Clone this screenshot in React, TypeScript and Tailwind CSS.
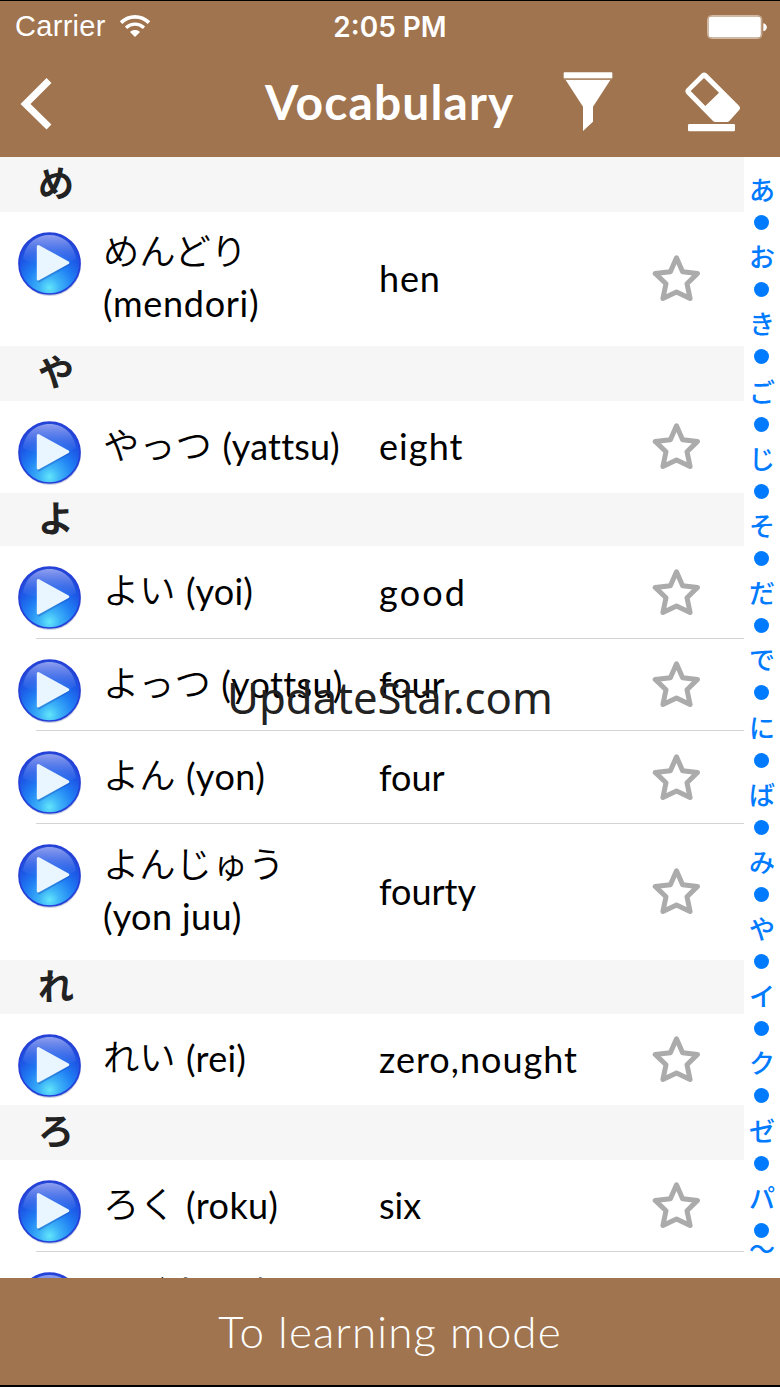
type Word = {
  kana: string;
  romaji?: string;
  meaning?: string;
  height: string;
  romajiTracking?: string;
  meaningTracking?: string;
  tall?: boolean;
  line?: boolean;
};
type Section = { title: string; height: string; words: Word[] };

const sections: Section[] = [
  {
    title: "め",
    height: "h-[55px]",
    words: [
      { kana: "めんどり", romaji: "(mendori)", meaning: "hen", height: "h-[134px]", romajiTracking: "tracking-[0.7px]", meaningTracking: "tracking-[0.8px]", tall: true },
    ],
  },
  {
    title: "や",
    height: "h-[55px]",
    words: [{ kana: "やっつ", romaji: "(yattsu)", meaning: "eight", height: "h-[92px]", meaningTracking: "tracking-[1.1px]" }],
  },
  {
    title: "よ",
    height: "h-[53px]",
    words: [
      { kana: "よい", romaji: "(yoi)", meaning: "good", height: "h-[93px]", meaningTracking: "tracking-[2.2px]", line: true },
      { kana: "よっつ", romaji: "(yottsu)", meaning: "four", height: "h-[92px]", romajiTracking: "tracking-[0.4px]", line: true },
      { kana: "よん", romaji: "(yon)", meaning: "four", height: "h-[93px]", romajiTracking: "tracking-[0.5px]", line: true },
      { kana: "よんじゅう", romaji: "(yon juu)", meaning: "fourty", height: "h-[136px]", romajiTracking: "tracking-[0.4px]", tall: true },
    ],
  },
  {
    title: "れ",
    height: "h-[54px]",
    words: [{ kana: "れい", romaji: "(rei)", meaning: "zero,nought", height: "h-[91px]", meaningTracking: "tracking-[1px]" }],
  },
  {
    title: "ろ",
    height: "h-[55px]",
    words: [
      { kana: "ろく", romaji: "(roku)", meaning: "six", height: "h-[92px]", romajiTracking: "tracking-[0.4px]", line: true },
      { kana: "ろくじゅう", height: "h-[136px]", tall: true },
    ],
  },
];

const indexLetters = ["あ", "お", "き", "ご", "じ", "そ", "だ", "で", "に", "ば", "み", "や", "イ", "ク", "ゼ", "パ"];

function WifiIcon() {
  return (
    <svg className="ml-[14px] h-[24px] w-[30px]" viewBox="0 0 90 72" fill="none" stroke="#fff">
      <path d="M3 23C27 0 63 0 87 23" strokeWidth="11" />
      <path d="M18 38C34 24 56 24 72 38" strokeWidth="10" />
      <path d="M30 51C39 43 51 43 60 51L45 66Z" fill="#fff" stroke="none" />
    </svg>
  );
}

function BatteryIcon() {
  return (
    <svg className="h-[24px] w-[60px]" viewBox="0 0 180 72">
      <rect x="1.5" y="1.5" width="163" height="69" rx="12" fill="none" stroke="#d3b9a3" strokeWidth="3" />
      <rect x="4.500" y="4.500" width="157" height="63" rx="9" fill="#fff" />
      <path d="M169 25C183 28 183 46 169 49Z" fill="#fff" />
    </svg>
  );
}

function FilterIcon() {
  return (
    <svg className="h-[60px] w-[50px]" viewBox="0 0 150 180" fill="#fff">
      <rect x="2" y="1" width="146" height="18" rx="2" />
      <path d="M8 24H142L90 104V149L60 177V104Z" />
      <path d="M4 21H146" stroke="#d5c1b1" strokeWidth="2" />
    </svg>
  );
}

function EraserIcon() {
  return (
    <svg className="h-[60px] w-[56px]" viewBox="0 0 168 180" fill="#fff">
      <path
        fillRule="evenodd"
        d="M49 5Q57-2 66 5L162 101Q168 108 162 115L133 147Q130 150 126 150H91Q87 150 84 147L4 65Q-2 57 4 50ZM57 18L17 57L61 102L102 62Z"
      />
      <rect x="9" y="156" width="141" height="22" rx="4" />
    </svg>
  );
}

function PlayIcon() {
  return (
    <svg className="mt-[19.500px] h-[65px] w-[65px] shrink-0" viewBox="0 0 65 65">
      <defs>
        <radialGradient id="ball" cx="0.5" cy="0.9" r="0.82">
          <stop offset="0" stopColor="#62e6fa" />
          <stop offset="0.2" stopColor="#3db4f8" />
          <stop offset="0.48" stopColor="#2080f4" />
          <stop offset="0.75" stopColor="#1c57e6" />
          <stop offset="1" stopColor="#2347d6" />
        </radialGradient>
        <linearGradient id="gloss" x1="0" y1="0" x2="0" y2="1">
          <stop offset="0" stopColor="#a3aff4" stopOpacity="0.85" />
          <stop offset="1" stopColor="#5d8df3" stopOpacity="0.1" />
        </linearGradient>
      </defs>
      <circle cx="32" cy="33" r="31" fill="#8b96b8" opacity="0.45" />
      <circle cx="31.5" cy="31.5" r="30.5" fill="url(#ball)" stroke="#2540d8" strokeWidth="1.7" />
      <path d="M5 27C7 12 18 3 31.5 3S56 12 58 27C48 33 40 28 31 29S14 33 5 27Z" fill="url(#gloss)" />
      <path d="M21 16L50.500 32L21 49Z" fill="#1749b8" stroke="#1749b8" strokeWidth="3" strokeLinejoin="round" opacity="0.35" />
      <path d="M20.300 14.500L49.800 30.700L20.300 47Z" fill="#eaf6ff" stroke="#eaf6ff" strokeWidth="3" strokeLinejoin="round" />
    </svg>
  );
}

function StarIcon() {
  return (
    <svg className="h-[48px] w-[50px]" viewBox="0 0 50 48" fill="none" stroke="#ababab" strokeWidth="5" strokeLinejoin="round">
      <path d="M24.500 2.800L30.600 16.700L45.500 18.400L35 28.700L38.100 43.500L24.500 37L10.900 43.500L14 28.700L3.200 18.400L18.400 16.700Z" />
    </svg>
  );
}

function WordRow({ word }: { word: Word }) {
  return (
    <div className={`relative flex shrink-0 pl-[18px] ${word.height}`}>
      <PlayIcon />
      <div className="ml-[20px] flex w-[276px] items-center pb-[2px] text-[36px] leading-[51px] whitespace-nowrap">
        <div className={word.tall ? "flex flex-col" : "flex gap-[10.500px]"}>
          <span className="-mt-[3px] mb-[3px] font-['Noto_Sans_CJK_JP',sans-serif] text-[36.300px] font-[350]">{word.kana}</span>
          <span className={`min-h-[51px] ${word.romajiTracking ?? "tracking-[0.2px]"}`}>{word.romaji}</span>
        </div>
      </div>
      <div className={`flex w-[273px] items-center pb-px text-[36px] leading-[51px] ${word.meaningTracking ?? ""}`}>{word.meaning}</div>
      <div className="flex items-center">
        <StarIcon />
      </div>
      {word.line && <div className="absolute right-0 bottom-0 left-[36px] h-px bg-[#d4d4d6]" />}
    </div>
  );
}

export default function App() {
  return (
    <div className="relative flex h-[1387px] w-[780px] flex-col overflow-hidden bg-white font-['Lato','Noto_Sans_CJK_JP',sans-serif] text-black">
      <header className="flex h-[157px] shrink-0 flex-col border-t border-black bg-[#9f744e] text-white">
        <div className="grid h-[51px] grid-cols-3 items-center">
          <div className="flex items-center pt-px pl-[15px] font-['Liberation_Sans',sans-serif] text-[29px] tracking-[0.3px]">
            Carrier
            <WifiIcon />
          </div>
          <div className="text-center font-['Inter',sans-serif] text-[28px] font-semibold">2:05 PM</div>
          <div className="flex justify-end pr-[13px]">
            <BatteryIcon />
          </div>
        </div>
        <div className="flex h-[104px] items-center">
          <svg className="ml-[20px] h-[52px] w-[33px]" viewBox="0 0 33 52" fill="none" stroke="#fff" strokeWidth="7">
            <path d="M29 2.500L5.500 26L29 49" />
          </svg>
          <h1 className="ml-[212px] w-[250px] pb-[5px] text-[48px] font-bold tracking-[1.100px] whitespace-nowrap">Vocabulary</h1>
          <div className="ml-[48px] pb-[5px]">
            <FilterIcon />
          </div>
          <div className="ml-[72px] pb-[5px]">
            <EraserIcon />
          </div>
        </div>
      </header>

      <main className="flex min-h-0 flex-1 overflow-hidden">
        <div className="flex w-[744px] flex-col">
          {sections.map((section) => (
            <section key={section.title} className="shrink-0">
              <h2
                className={`flex items-center bg-[#f6f6f6] pb-[6px] pl-[38px] font-['Noto_Sans_CJK_JP',sans-serif] text-[36px] leading-[49px] font-bold text-[#222] ${section.height}`}
              >
                {section.title}
              </h2>
              {section.words.map((word) => (
                <WordRow key={word.kana} word={word} />
              ))}
            </section>
          ))}
        </div>
        <nav className="flex w-[36px] flex-col items-center pt-[15px] font-['Noto_Sans_CJK_JP',sans-serif] text-[26px] font-medium text-[#007aff]">
          {indexLetters.map((letter) => (
            <div key={letter} className="flex h-[67.200px] shrink-0 flex-col items-center">
              <span className="h-[43px] leading-[34px]">{letter}</span>
              <span className="size-[15px] rounded-full bg-[#007aff]" />
            </div>
          ))}
          <span className="-mt-[16px] leading-[34px]">〜</span>
        </nav>
      </main>

      <footer className="flex h-[109px] shrink-0 items-center justify-center border-b-2 border-black bg-[#9f744e] pb-[2px] text-[44px] font-light tracking-[1.100px] text-white">
        To learning mode
      </footer>

      <div className="absolute top-[667px] left-[227px] font-['Noto_Sans',sans-serif] text-[43.700px] leading-[60px] whitespace-nowrap text-[#222]">
        UpdateStar.com
      </div>
    </div>
  );
}
